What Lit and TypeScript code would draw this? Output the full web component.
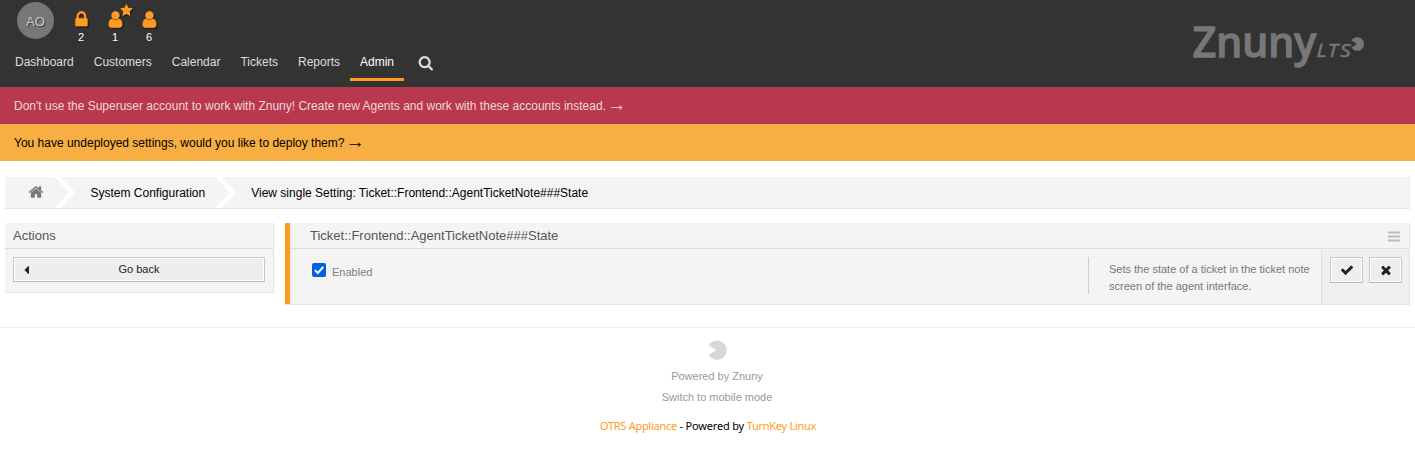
import { LitElement, html, css, svg } from "lit";
import { customElement, property } from "lit/decorators.js";

const ICONS: Record<string, string> = {
  home: "M1472 992v480q0 26-19 45t-45 19h-384v-384h-256v384h-384q-26 0-45-19t-19-45v-480q0-1 .5-3t.5-3l575-474 575 474q1 2 1 6zm223-69l-62 74q-8 9-21 11h-3q-13 0-21-7l-692-577-692 577q-12 8-24 7-13-2-21-11l-62-74q-8-10-7-23.5t11-21.5l719-599q32-26 76-26t76 26l244 204v-195q0-14 9-23t23-9h192q14 0 23 9t9 23v408l219 182q10 8 11 21.5t-7 23.5z",
  search: "M1216 832q0-185-131.500-316.500t-316.500-131.500-316.500 131.500-131.500 316.500 131.500 316.500 316.500 131.500 316.500-131.500 131.500-316.500zm512 832q0 52-38 90t-90 38q-54 0-90-38l-343-342q-179 124-399 124-143 0-273.500-55.500t-225-150-150-225-55.500-273.500 55.500-273.500 150-225 225-150 273.500-55.500 273.500 55.500 225 150 150 225 55.500 273.500q0 220-124 399l343 343q37 37 37 90z",
  lock: "M640 768h512v-192q0-106-75-181t-181-75-181 75-75 181v192zm832 96v576q0 40-28 68t-68 28h-960q-40 0-68-28t-28-68v-576q0-40 28-68t68-28h32v-192q0-184 132-316t316-132 316 132 132 316v192h32q40 0 68 28t28 68z",
  user: "M1536 1399q0 109-62.500 187t-150.500 78h-854q-88 0-150.500-78t-62.500-187q0-85 8.500-160.500t31.500-152 58.500-131 94-89 134.500-34.500q131 128 313 128t313-128q76 0 134.500 34.500t94 89 58.500 131 31.500 152 8.500 160.500zm-256-887q0 159-112.500 271.500t-271.500 112.500-271.500-112.500-112.500-271.500 112.500-271.500 271.500-112.500 271.500 112.500 112.500 271.500z",
  star: "M1728 647q0 22-26 48l-363 354 86 500q1 7 1 20 0 21-10.500 35.500t-30.500 14.500q-19 0-40-12l-449-236-449 236q-22 12-40 12-21 0-31.500-14.500t-10.500-35.500q0-6 2-20l86-500-364-354q-25-27-25-48 0-37 56-46l502-73 225-455q19-41 49-41t49 41l225 455 502 73q56 9 56 46z",
  check: "M1671 566q0 40-28 68l-724 724-136 136q-28 28-68 28t-68-28l-136-136-362-362q-28-28-28-68t28-68l136-136q28-28 68-28t68 28l294 295 656-657q28-28 68-28t68 28l136 136q28 28 28 68z",
  times: "M1490 1322q0 40-28 68l-136 136q-28 28-68 28t-68-28l-294-294-294 294q-28 28-68 28t-68-28l-136-136q-28-28-28-68t28-68l294-294-294-294q-28-28-28-68t28-68l136-136q28-28 68-28t68 28l294 294 294-294q28-28 68-28t68 28l136 136q28 28 28 68t-28 68l-294 294 294 294q28 28 28 68z",
  caret: "M1152 448v896q0 26-19 45t-45 19-45-19l-448-448q-19-19-19-45t19-45l448-448q19-19 45-19t45 19 19 45z",
  bars: "M1664 1344v128q0 26-19 45t-45 19h-1408q-26 0-45-19t-19-45v-128q0-26 19-45t45-19h1408q26 0 45 19t19 45zm0-512v128q0 26-19 45t-45 19h-1408q-26 0-45-19t-19-45v-128q0-26 19-45t45-19h1408q26 0 45 19t19 45zm0-512v128q0 26-19 45t-45 19h-1408q-26 0-45-19t-19-45v-128q0-26 19-45t45-19h1408q26 0 45 19t19 45z",
};

@customElement("z-icon")
class ZIcon extends LitElement {
  @property() name = "home";
  static styles = css`
    :host { display: block; width: 16px; height: 16px; flex: none; }
    svg { display: block; width: 100%; height: 100%; fill: currentColor; overflow: visible; }
  `;
  render() {
    return html`<svg viewBox="0 0 1792 1792">${svg`<path d=${ICONS[this.name]}></path>`}</svg>`;
  }
}

@customElement("app-root")
class AppRoot extends LitElement {
  static styles = css`
    :host {
      display: block; height: 458px; overflow: hidden; background: #fff; color: #000;
      font: 12px/15px "Liberation Sans", Arial, sans-serif;
    }
    * { box-sizing: border-box; }
    header {
      height: 87px; background: #333; display: flex; justify-content: space-between;
      padding: 0 50px 0 5px;
    }
    .tools { display: flex; height: 45px; padding-left: 12px; }
    .avatar {
      width: 37px; height: 37px; margin: 2px 10px 0 0; border-radius: 50%; background: #777;
      color: #ccc; font-size: 13px; line-height: 39px; text-align: center;
      text-shadow: 1px 1px 1px #333;
    }
    .tool { position: relative; width: 34px; padding-top: 10px; color: #fff; font-size: 11px; text-align: center; }
    .tool .main { width: 19px; height: 19px; margin: 0 auto 1px; color: #ff9b22; filter: drop-shadow(1px 1px 0 #111); stroke: #ff9b22; stroke-width: 30px; }
    .tool .star {
      position: absolute; left: 22px; top: 4px; width: 13px; height: 13px;
      color: #ff9b22; filter: drop-shadow(1px 1px 0 #111);
    }
    nav { display: flex; height: 36px; color: #ddd; }
    .item { padding: 10px 10px 0; height: 36px; }
    .item.active { color: #fff; border-bottom: 3px solid #ff9b22; }
    .search { margin: 10px 0 0 13.500px; width: 15.500px; height: 15.500px; color: #ddd; }
    .logo { display: block; width: 180px; height: 80px; fill: #777; font-family: "Noto Sans", "Open Sans", sans-serif; }
    .word { font-size: 41.500px; font-weight: 500; stroke: #777; stroke-width: 1.300px; }
    .edition { font-size: 17.500px; font-style: italic; letter-spacing: 1.500px; stroke: #777; stroke-width: 0.4px; }
    .notice { height: 37px; padding: 12px 14px 0; background: #b8384d; color: #f1d7db; }
    .notice.warn { background: #f7ae42; color: #000; }
    .arrow { font-size: 19px; line-height: 0; margin-left: -2px; position: relative; top: 1px; }
    .crumbs {
      height: 32px; margin: 16px 5px 14px; display: flex; background: #f4f4f4;
      border-bottom: 1px solid #e5e5e5; border-right: 1px solid #e9e9e9; line-height: 32px;
    }
    .homecell { width: 50px; padding: 7px 0 0 23px; color: #777; }
    .chev { display: block; width: 23px; height: 31px; flex: none; fill: none; stroke: #fff; stroke-width: 4.500; }
    .crumb { padding: 0 10.500px 0 12.500px; white-space: nowrap; }
    .columns { display: flex; align-items: flex-start; gap: 11px; padding: 0 5px; }
    .box { background: #f4f4f4; border-right: 1px solid #e5e5e5; border-bottom: 1px solid #e5e5e5; }
    .side { width: 269px; height: 70px; }
    .title {
      height: 26px; border-bottom: 1px solid #ddd; padding-left: 8px;
      font-size: 13px; line-height: 25px; color: #555;
    }
    .btn {
      display: flex; align-items: center; justify-content: center; border: 1px solid #bbb;
      border-color: #c8c8c8 #c8c8c8 #b5b5b5; background: #eee; box-shadow: inset 0 0 0 1px #fff; color: #222;
    }
    .back { width: 252px; height: 25px; margin: 8px; font-size: 11px; display: grid; grid-template-columns: 26px 1fr 26px; justify-items: center; line-height: 23px; }
    .back .caret { width: 14px; height: 14px; }
    .setting { flex: 1; height: 82px; border-left: 0; display: flex; }
    .stripe { width: 5px; height: 81px; background: #ff9b22; }
    .main-area { flex: 1; }
    .setting .title { padding: 0 8px 0 20px; display: flex; justify-content: space-between; }
    .bars { width: 14px; height: 15px; margin-top: 6px; color: #bbb; }
    .body { display: flex; height: 55px; }
    .value { flex: 1; display: flex; align-items: flex-start; padding: 14px 0 0 22px; color: #808080; font-size: 11px; }
    .box-check { display: block; width: 14px; height: 14px; margin-right: 6px; }
    .label { padding-top: 2px; }
    .desc {
      width: 233px; height: 37px; margin-top: 8px; border-left: 1px solid #ccc;
      padding: 4px 0 0 20px; font-size: 11px; line-height: 17px; color: #777; white-space: nowrap;
    }
    .acts {
      width: 88px; height: 54px; margin-top: 1px; border-left: 1px solid #ddd; background: #f0f0f0;
      display: flex; gap: 6px; padding: 7px 0 0 8px;
    }
    .acts .btn { width: 33px; height: 26px; }
    .acts z-icon { width: 14px; height: 14px; }
    footer {
      margin-top: 22px; border-top: 1px solid #eee; padding: 12px 0 0;
      display: flex; flex-direction: column; align-items: center; color: #999; font-size: 11px;
    }
    .pac { display: block; width: 20px; height: 20px; fill: #d8d8d8; margin-left: 19px; }
    .powered { margin: 9px 0 6px 19px; }
    .mobile { margin-left: 19px; }
    .appliance { margin: 13px 0 0 1px; color: #000; font-family: "Noto Sans", sans-serif; letter-spacing: -0.18px; white-space: nowrap; }
    .hl { color: #ff9b22; letter-spacing: -0.28px; }
  `;

  tool(icon: string, count: number, starred = false) {
    return html`<div class="tool">
      <z-icon class="main" name=${icon}></z-icon>
      ${starred ? html`<z-icon class="star" name="star"></z-icon>` : ""}
      ${count}
    </div>`;
  }

  chevron() {
    return html`<svg class="chev" viewBox="0 0 23 31"><path d="M0 -2.500L17 15.500L0 33.500"></path></svg>`;
  }

  render() {
    return html`
      <header>
        <div>
          <div class="tools">
            <div class="avatar">AO</div>
            ${this.tool("lock", 2)}${this.tool("user", 1, true)}${this.tool("user", 6)}
          </div>
          <nav>
            ${["Dashboard", "Customers", "Calendar", "Tickets", "Reports", "Admin"].map(
              (n) => html`<div class="item ${n === "Admin" ? "active" : ""}">${n}</div>`
            )}
            <z-icon class="search" name="search"></z-icon>
          </nav>
        </div>
        <svg class="logo" viewBox="0 0 180 80">
          <text class="word" x="7.500" y="56.800" textLength="123.500" lengthAdjust="spacingAndGlyphs">Znuny</text>
          <text class="edition" x="131.500" y="57" textLength="36" lengthAdjust="spacingAndGlyphs">LTS</text>
          <path d="M172 44L166.500 40.500A6.800 6.800 0 1 1 166.500 47.500Z"></path>
        </svg>
      </header>
      <div class="notice">Don't use the Superuser account to work with Znuny! Create new Agents and work with these accounts instead. <span class="arrow">→</span></div>
      <div class="notice warn">You have undeployed settings, would you like to deploy them? <span class="arrow">→</span></div>
      <div class="crumbs">
        <div class="homecell"><z-icon name="home"></z-icon></div>
        ${this.chevron()}
        <div class="crumb">System Configuration</div>
        ${this.chevron()}
        <div class="crumb">View single Setting: Ticket::Frontend::AgentTicketNote###State</div>
      </div>
      <div class="columns">
        <div class="box side">
          <div class="title">Actions</div>
          <div class="btn back"><z-icon class="caret" name="caret"></z-icon><span>Go back</span></div>
        </div>
        <div class="box setting">
          <div class="stripe"></div>
          <div class="main-area">
            <div class="title"><span>Ticket::Frontend::AgentTicketNote###State</span><z-icon class="bars" name="bars"></z-icon></div>
            <div class="body">
              <div class="value">
                <svg class="box-check" viewBox="0 0 14 14">
                  <rect width="14" height="14" rx="2" fill="#0060df"></rect>
                  <path d="M3 7.200L5.800 10L11.300 3.800" fill="none" stroke="#fff" stroke-width="2"></path>
                </svg>
                <span class="label">Enabled</span>
              </div>
              <div class="desc">Sets the state of a ticket in the ticket note<br />screen of the agent interface.</div>
              <div class="acts">
                <div class="btn"><z-icon name="check"></z-icon></div>
                <div class="btn"><z-icon name="times"></z-icon></div>
              </div>
            </div>
          </div>
        </div>
      </div>
      <footer>
        <svg class="pac" viewBox="0 0 20 20"><path d="M9.500 10L1.500 5.500A9.700 9.700 0 1 1 1.500 14.800Z"></path></svg>
        <div class="powered">Powered by Znuny</div>
        <div class="mobile">Switch to mobile mode</div>
        <div class="appliance"><span class="hl">OTRS Appliance</span> - Powered by <span class="hl">TurnKey Linux</span></div>
      </footer>
    `;
  }
}
